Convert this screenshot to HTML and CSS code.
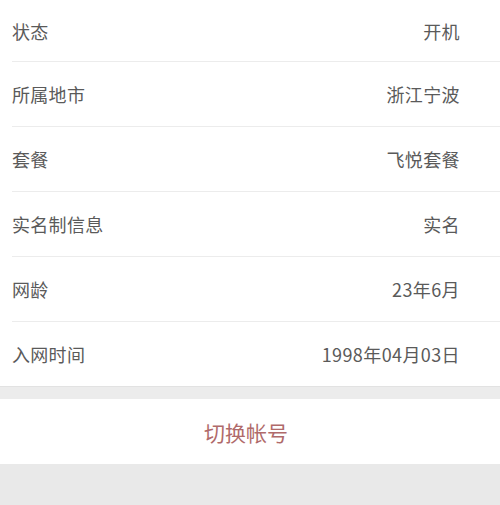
FILE: index.html
```html
<!DOCTYPE html>
<html lang="zh">
<head>
<meta charset="utf-8">
<link rel="stylesheet" href="styles.css">
</head>
<body>
<div class="list">
  <div class="row first"><span class="label">状态</span><span class="value">开机</span></div>
  <div class="row"><span class="label">所属地市</span><span class="value">浙江宁波</span></div>
  <div class="row"><span class="label">套餐</span><span class="value">飞悦套餐</span></div>
  <div class="row"><span class="label">实名制信息</span><span class="value">实名</span></div>
  <div class="row"><span class="label">网龄</span><span class="value">23年6月</span></div>
  <div class="row last"><span class="label">入网时间</span><span class="value">1998年04月03日</span></div>
</div>
<div class="gap"></div>
<div class="switch">切换帐号</div>
<div class="rest"></div>
</body>
</html>
```
FILE: styles.css
```css
html, body {
  margin: 0;
  padding: 0;
  background: #e9e9e9;
  font-family: "Noto Sans CJK SC", "Noto Sans", sans-serif;
}
.list {
  background: #fff;
}
.row {
  height: 64px;
  margin-left: 12px;
  padding-right: 40px;
  display: flex;
  align-items: center;
  justify-content: space-between;
  border-bottom: 1px solid #ececec;
  font-size: 18px;
  color: #5a5a5a;
}
.label {
  letter-spacing: 0.3px;
}
.value {
  letter-spacing: 0.4px;
}
.row.first {
  height: 61px;
}
.row.last {
  border-bottom: none;
}
.gap {
  height: 12px;
  background: #ececec;
  border-top: 1px solid #e2e2e2;
}
.switch {
  height: 65px;
  background: #fff;
  display: flex;
  align-items: center;
  justify-content: center;
  font-size: 21px;
  color: #b06a6a;
  padding-right: 8px;
}
.rest {
  height: 60px;
  background: #e9e9e9;
}
```
